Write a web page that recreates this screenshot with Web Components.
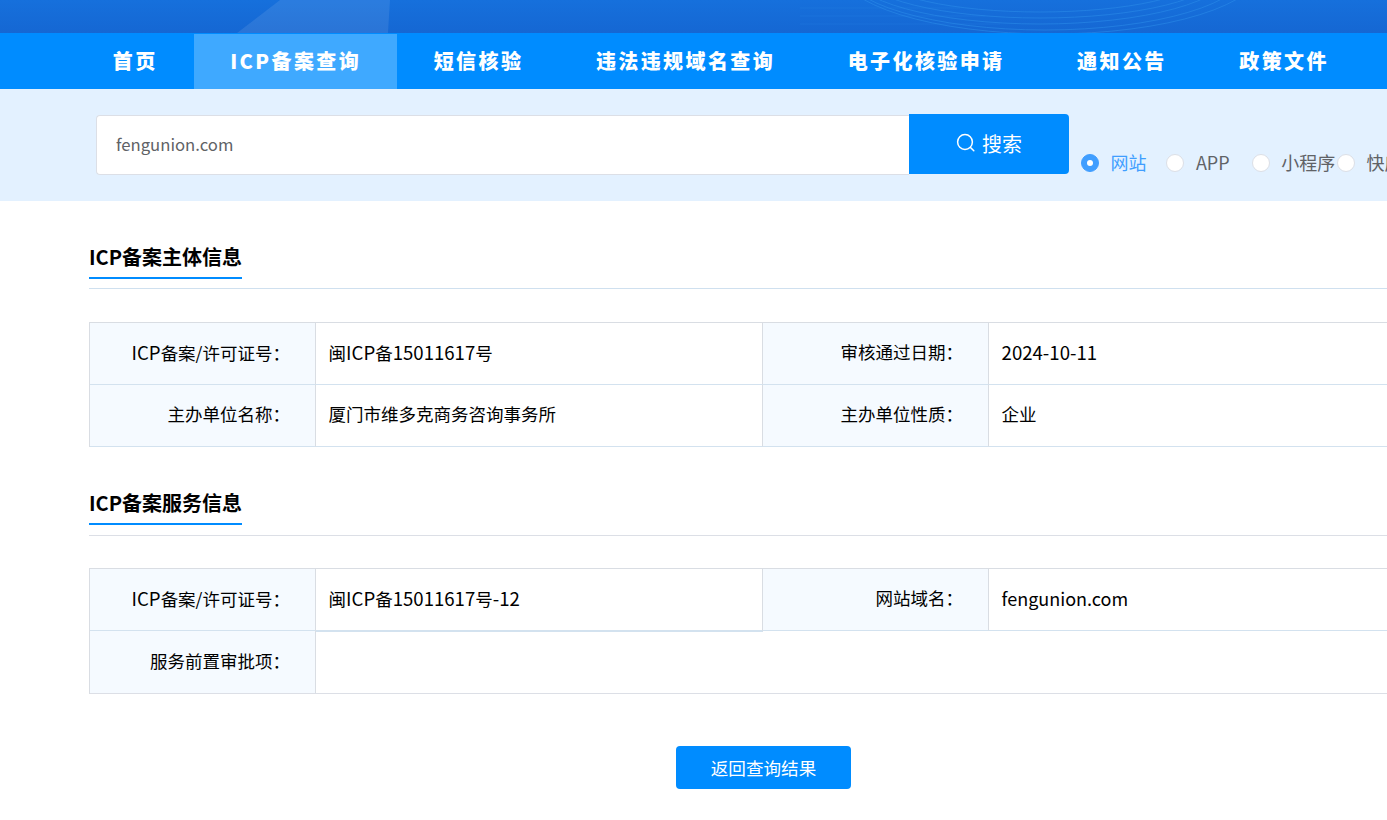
<!DOCTYPE html>
<html lang="zh-CN"><head><meta charset="utf-8"><title>ICP备案查询</title>
<style>
html,body{margin:0;padding:0;height:820px;overflow:hidden;background:#fff}
body{width:1387px;font-family:"Noto Sans CJK SC","Noto Sans",sans-serif;color:#000}
</style></head><body>
<x-hero></x-hero>
<x-nav>
  <x-nav-item>首页</x-nav-item>
  <x-nav-item active>ICP备案查询</x-nav-item>
  <x-nav-item>短信核验</x-nav-item>
  <x-nav-item>违法违规域名查询</x-nav-item>
  <x-nav-item>电子化核验申请</x-nav-item>
  <x-nav-item>通知公告</x-nav-item>
  <x-nav-item>政策文件</x-nav-item>
</x-nav>
<x-search value="fengunion.com">
  <x-radio checked>网站</x-radio><x-radio>APP</x-radio><x-radio>小程序</x-radio><x-radio>快应用</x-radio>
</x-search>
<x-section heading="ICP备案主体信息">
  <x-info-table>
    <x-cell label><x-l>ICP</x-l>备案/许可证号：</x-cell><x-cell>闽<x-l>ICP</x-l>备<x-l>15011617</x-l>号</x-cell><x-cell label>审核通过日期：</x-cell><x-cell><x-l>2024-10-11</x-l></x-cell>
    <x-cell label>主办单位名称：</x-cell><x-cell>厦门市维多克商务咨询事务所</x-cell><x-cell label>主办单位性质：</x-cell><x-cell>企业</x-cell>
  </x-info-table>
</x-section>
<x-section heading="ICP备案服务信息" second>
  <x-info-table>
    <x-cell label><x-l>ICP</x-l>备案/许可证号：</x-cell><x-cell under>闽<x-l>ICP</x-l>备<x-l>15011617</x-l>号<x-l>-12</x-l></x-cell><x-cell label>网站域名：</x-cell><x-cell><x-l plain>fengunion.com</x-l></x-cell>
    <x-cell label tall>服务前置审批项：</x-cell><x-cell wide tall></x-cell>
  </x-info-table>
</x-section>
<x-action>返回查询结果</x-action>
<script>
function def(name,html,init){customElements.define(name,class extends HTMLElement{constructor(){super();this.attachShadow({mode:'open'}).innerHTML=html;}connectedCallback(){init&&init(this)}})}
def('x-hero',`<style>:host{display:block;height:33px;overflow:hidden;background:linear-gradient(180deg,#1670dc 0%,#1567d3 100%)}svg{display:block}</style>
<svg width="1387" height="33" viewBox="0 0 1387 33" fill="none">
<path d="M237 33 L280 0 H390 Q389 16 388 33Z" fill="#fff" fill-opacity=".09"/>
<g stroke="#2a8ae8" stroke-opacity=".6">
<path d="M800 8 H960" stroke-opacity=".25"/><path d="M800 16 H985" stroke-opacity=".25"/><path d="M800 24 H1000" stroke-opacity=".25"/>
<ellipse cx="1040" cy="-26" rx="178" ry="44"/>
<ellipse cx="1040" cy="-28" rx="190" ry="52"/>
<ellipse cx="1045" cy="-30" rx="202" ry="60"/>
<ellipse cx="1050" cy="-32" rx="212" ry="66"/>
<ellipse cx="1040" cy="-24" rx="160" ry="36"/>
</g></svg>`);
def('x-nav',`<style>:host{display:flex;height:56px;background:#008cff;padding-left:76.5px;box-sizing:border-box}</style><slot></slot>`);
def('x-nav-item',`<style>:host{display:flex;align-items:center;box-sizing:border-box;height:55px;margin-top:1px;padding:0 36.3px 3px;color:#fff;font-size:20px;font-weight:900;letter-spacing:2.4px;white-space:nowrap;flex:none}
:host([active]){background:#3fa9ff}</style><slot></slot>`);
def('x-search',`<style>:host{display:flex;align-items:flex-start;height:112px;background:#e3f1ff;padding:25px 0 0 96px;box-sizing:border-box;overflow:hidden;white-space:nowrap}
.input{flex:none;box-sizing:border-box;width:813px;height:60px;margin-top:1px;background:#fff;border:1px solid #dcdfe6;border-right:0;border-radius:4px 0 0 4px;padding-left:19px;font-size:16.7px;line-height:56px;color:#606266}
.btn{flex:none;width:160px;height:60px;background:#008cff;border-radius:0 4px 4px 0;color:#fff;font-size:20px;display:flex;align-items:center;justify-content:center;gap:6px;padding-bottom:2px;box-sizing:border-box}
.radios{display:flex;margin:36px 0 0 12px}</style>
<div class="input" id="v"></div><div class="btn"><svg width="20" height="20" viewBox="0 0 20 20" fill="none" stroke="#fff" stroke-width="1.5"><circle cx="9" cy="9" r="7.4"/><path d="M14.5 14.5l3.3 3.3" stroke-linecap="round"/></svg><span>搜索</span></div><div class="radios"><slot></slot></div>`,e=>{e.shadowRoot.getElementById('v').textContent=e.getAttribute('value')});
def('x-radio',`<style>:host{display:flex;align-items:center;flex:none;width:85.3px;height:26px;font-size:18px;color:#606266}
:host([checked]){color:#409eff}
span{padding-bottom:2px;margin-left:-.4px}
i{flex:none;box-sizing:border-box;width:18px;height:18px;border-radius:50%;background:#fff;border:1px solid #dcdfe6;margin-right:12px;display:flex;align-items:center;justify-content:center}
:host([checked]) i{background:#409eff;border-color:#409eff}
:host([checked]) i::after{content:"";width:6px;height:6px;border-radius:50%;background:#fff}</style><i></i><span><slot></slot></span>`);
def('x-section',`<style>:host{display:block;margin-left:89px;width:1400px;padding-top:43px}
:host([second]) .b{padding-top:32px}
:host([second]) .t{height:45px;border-bottom-color:#dcdfe6}
.t{border-bottom:1px solid #cfe0ef;height:44px}
h2{display:inline-block;margin:0;box-sizing:border-box;height:35px;border-bottom:2px solid #008cff;font-size:20px;font-weight:700;line-height:26px;color:#000}
.b{padding-top:33px}</style><div class="t"><h2 id="h"></h2></div><div class="b"><slot></slot></div>`,e=>{e.shadowRoot.getElementById('h').textContent=e.getAttribute('heading')});
def('x-info-table',`<style>:host{display:grid;grid-template-columns:226px 447px 226px 1fr;border-top:1px solid #d9dde3;border-left:1px solid #d9dde3}</style><slot></slot>`);
def('x-cell',`<style>:host{box-sizing:border-box;height:62px;display:flex;align-items:center;font-size:17.5px;color:#000;padding:0 0 3.6px 12.6px;border-right:1px solid #d9dde3;border-bottom:1px solid #d3e2ef;white-space:pre}
:host([label]){background:#f5faff;justify-content:flex-end;padding:0 25px 3.6px 0}
:host([wide]){grid-column:span 3}
:host([tall]){height:63px;border-bottom-color:#dcdfe6}
:host([under]){border-bottom-width:2px;height:63px;margin-bottom:-1px;position:relative}</style><span><slot></slot></span>`);
def('x-l',`<style>:host{display:inline;font-size:18.6px}:host([plain]){font-size:18px}</style><slot></slot>`);
def('x-action',`<style>:host{display:flex;justify-content:center;width:1527px;box-sizing:border-box;padding-top:52px}
div{width:175px;height:43px;background:#008cff;border-radius:4px;color:#fff;font-size:17.6px;display:flex;align-items:center;justify-content:center}</style><div><slot></slot></div>`);
</script>
</body></html>
